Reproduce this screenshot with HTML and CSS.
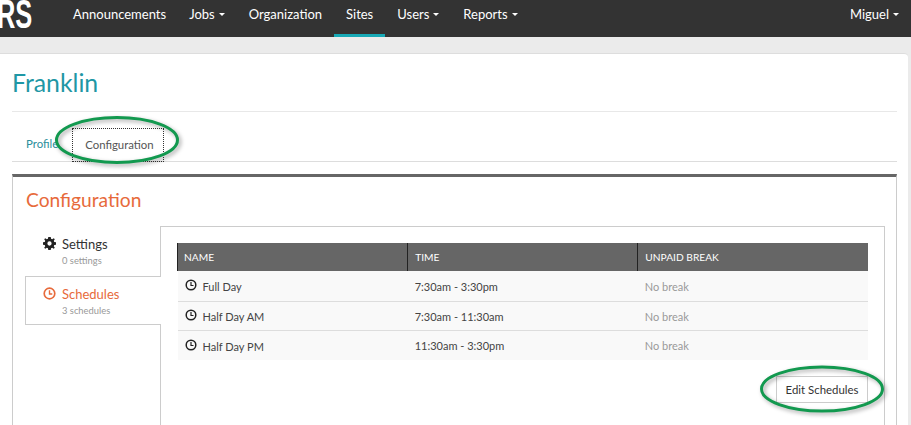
FILE: index.html
```html
<!DOCTYPE html>
<html lang="en">
<head>
<meta charset="utf-8">
<title>Franklin</title>
<link rel="stylesheet" href="styles.css">
</head>
<body>
<nav class="nav">
  <div class="logo"><span class="logo-text">RS</span></div>
  <ul class="nav-list">
    <li class="nav-item">Announcements</li>
    <li class="nav-item">Jobs<i class="caret"></i></li>
    <li class="nav-item">Organization</li>
    <li class="nav-item active">Sites</li>
    <li class="nav-item">Users<i class="caret"></i></li>
    <li class="nav-item">Reports<i class="caret"></i></li>
  </ul>
  <div class="nav-item user">Miguel<i class="caret"></i></div>
</nav>
<main class="card">
  <h1 class="title">Franklin</h1>
  <div class="tabs">
    <a class="tab">Profile</a>
    <a class="tab tab-active">Configuration</a>
  </div>
  <section class="panel">
    <h2 class="panel-title">Configuration</h2>
    <div class="split">
      <aside class="side">
        <div class="side-item">
          <div class="side-name">
            <svg class="side-icon" viewBox="0 0 14 14"><path fill="#222" fill-rule="evenodd" d="M5.7 0h2.600l.4 1.900 1.200.5 1.700-1.100 1.100 1.100-1.100 1.700.5 1.200 1.900.4v2.600l-1.900.4-.5 1.200 1.100 1.700-1.100 1.100-1.700-1.100-1.200.5-.4 1.900H5.700l-.4-1.900-1.200-.5-1.700 1.100-1.100-1.100 1.100-1.700-.5-1.200L0 8.300V5.700l1.900-.4.5-1.200-1.100-1.700 1.100-1.100 1.700 1.100 1.200-.5zM7 4.700a2.300 2.300 0 1 0 0 4.600 2.300 2.300 0 0 0 0-4.600z"/></svg>
            <span>Settings</span>
          </div>
          <div class="side-sub">0 settings</div>
        </div>
        <div class="side-item side-active">
          <div class="side-name">
            <svg class="side-icon" viewBox="0 0 14 14"><circle cx="7" cy="7" r="5.700" fill="none" stroke="currentColor" stroke-width="1.800"/><path d="M7 3.500V7.500H10" fill="none" stroke="currentColor" stroke-width="1.500"/></svg>
            <span>Schedules</span>
          </div>
          <div class="side-sub">3 schedules</div>
        </div>
      </aside>
      <div class="content">
        <table class="table">
          <thead>
            <tr><th>NAME</th><th>TIME</th><th>UNPAID BREAK</th></tr>
          </thead>
          <tbody>
            <tr>
              <td><svg class="row-icon" viewBox="0 0 12 12"><circle cx="6" cy="6" r="4.800" fill="none" stroke="currentColor" stroke-width="1.500"/><path d="M6 3V6.500H8.500" fill="none" stroke="currentColor" stroke-width="1.200"/></svg>Full Day</td>
              <td>7:30am - 3:30pm</td>
              <td class="muted">No break</td>
            </tr>
            <tr>
              <td><svg class="row-icon" viewBox="0 0 12 12"><circle cx="6" cy="6" r="4.800" fill="none" stroke="currentColor" stroke-width="1.500"/><path d="M6 3V6.500H8.500" fill="none" stroke="currentColor" stroke-width="1.200"/></svg>Half Day AM</td>
              <td>7:30am - 11:30am</td>
              <td class="muted">No break</td>
            </tr>
            <tr>
              <td><svg class="row-icon" viewBox="0 0 12 12"><circle cx="6" cy="6" r="4.800" fill="none" stroke="currentColor" stroke-width="1.500"/><path d="M6 3V6.500H8.500" fill="none" stroke="currentColor" stroke-width="1.200"/></svg>Half Day PM</td>
              <td>11:30am - 3:30pm</td>
              <td class="muted">No break</td>
            </tr>
          </tbody>
        </table>
        <div class="actions"><button class="btn">Edit Schedules</button></div>
      </div>
    </div>
  </section>
</main>
<svg class="mark mark-tab" viewBox="0 0 130 56"><ellipse cx="63" cy="26" rx="60.500" ry="22.500"/></svg>
<svg class="mark mark-btn" viewBox="0 0 130 56"><ellipse cx="63" cy="26" rx="60.500" ry="22"/></svg>
</body>
</html>
```

FILE: styles.css
```css
* { box-sizing: border-box; }
html, body { margin: 0; height: 425px; overflow: hidden; }
body {
  position: relative;
  background: #ebebeb;
  font-family: Lato, "Liberation Sans", sans-serif;
  font-size: 11px;
  color: #333;
}
.nav {
  display: flex;
  height: 37px;
  background: #333;
  color: #fff;
  font-size: 13px;
}
.logo { width: 61px; overflow: hidden; }
.logo-text {
  display: block;
  width: 32px;
  font-family: "Liberation Sans", sans-serif;
  font-size: 41px;
  font-weight: 700;
  line-height: 28px;
  transform: translateX(-3px) scaleX(.62);
  transform-origin: left top;
}
.nav-list { display: flex; flex: 1; margin: 0; padding: 0; list-style: none; }
.nav-item {
  display: flex;
  align-items: flex-start;
  padding: 6px 12px 0;
  line-height: 17px;
}
.nav-item:first-child { padding-right: 11px; }
.nav-item.active { border-bottom: 3px solid #17a9b5; }
.caret {
  width: 0;
  height: 0;
  margin: 7px 0 0 4px;
  border: 3px solid transparent;
  border-top-color: #fff;
  border-bottom: 0;
}
.card {
  height: 372px;
  width: 908px;
  margin-top: 16px;
  padding: 0 11px 0 12px;
  background: #fff;
  border-top: 1px solid #ddd;
  border-radius: 0 4px 0 0;
}
.title {
  height: 58px;
  margin: 0;
  padding: 13px 0 0;
  border-bottom: 1px solid #e8e8e8;
  font-size: 24.800px;
  font-weight: 400;
  line-height: 31px;
  color: #1f97a5;
}
.tabs {
  display: flex;
  height: 50px;
  padding: 16px 0 0 2px;
  border-bottom: 1px solid #ddd;
}
.tab {
  height: 33px;
  padding: 8px 12px 0;
  color: #2c8e9b;
  font-size: 11.400px;
  line-height: 16px;
}
.tab-active {
  width: 92px;
  height: 34px;
  margin-left: 2px;
  padding: 8px 0 0 12px;
  border: 1px dotted #333;
  color: #555;
}
.panel {
  height: 260px;
  margin-top: 12px;
  padding: 0 13px 0 13px;
  border-top: 3px solid #666;
  border-left: 1px solid #ccc;
  border-right: 1px solid #ccc;
}
.panel-title {
  height: 49px;
  margin: 0;
  padding-top: 11px;
  color: #e76a3b;
  font-size: 19.200px;
  font-weight: 400;
  line-height: 24px;
}
.split { display: flex; height: 200px; margin-left: -1px; }
.side { width: 135px; flex: none; }
.side-item { height: 50px; padding: 10px 0 0 18px; }
.side-active {
  width: 136px;
  height: 49px;
  position: relative;
  z-index: 1;
  background: #fff;
  border: 1px solid #ccc;
  border-right: 0;
  padding-top: 9px;
  padding-left: 17px;
  color: #e76a3b;
}
.side-name {
  display: flex;
  align-items: center;
  gap: 6px;
  height: 17px;
  font-size: 13px;
  line-height: 17px;
}
.side-icon { width: 13px; height: 13px; margin-top: -2px; }
.side-sub {
  margin: 1px 0 0 19px;
  color: #999;
  font-size: 9.400px;
  line-height: 13px;
}
.content {
  flex: 1;
  padding: 16px 16px 0;
  border: 1px solid #ccc;
  border-bottom: 0;
}
.table { width: 691px; border-collapse: collapse; table-layout: fixed; }
.table th {
  width: 230px;
  height: 28px;
  padding: 0 7px;
  background: #666;
  border-left: 1px solid #222;
  color: #fff;
  font-size: 10.200px;
  font-weight: 400;
  text-align: left;
}
.table th:first-child { padding-left: 6px; }
.table td {
  height: 29px;
  padding: 1px 7px 0;
  background: #f9f9f9;
  border-top: 1px solid #ddd;
  font-size: 11px;
  color: #444;
}
.table tbody tr:first-child td { height: 30px; padding-top: 1px; border-top: 0; }
.table tbody tr:last-child td { height: 30px; }
.table .muted { color: #999; }
.row-icon { width: 12px; height: 12px; margin-right: 6px; vertical-align: 0; color: #222; }
.actions { display: flex; justify-content: flex-end; padding-top: 16px; }
.btn {
  width: 92px;
  height: 27px;
  padding: 0;
  background: #fff;
  border: 1px solid #ccc;
  color: #333;
  font-family: inherit;
  font-size: 11.400px;
}
.mark {
  position: absolute;
  width: 130px;
  height: 56px;
  overflow: visible;
  filter: drop-shadow(2px 2px 2px rgba(0,0,0,.35));
}
.mark ellipse { fill: none; stroke: #12994f; stroke-width: 3; }
.mark-tab { left: 54px; top: 114px; }
.mark-btn { left: 759px; top: 363px; }
```
